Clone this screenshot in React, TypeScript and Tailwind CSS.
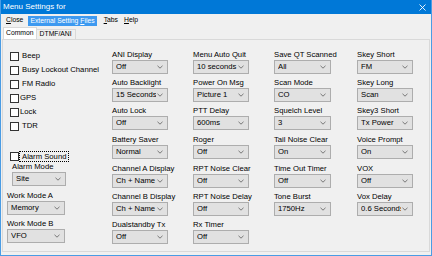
const font = { fontFamily: '"Liberation Sans", Arial, sans-serif' };

type Field = { label: string; value: string; mt?: string };

const columns: { x: string; w: string; items: Field[] }[] = [
  {
    x: "w-[81px]",
    w: "w-[56px]",
    items: [
      { label: "ANI Display", value: "Off" },
      { label: "Auto Backlight", value: "15 Seconds" },
      { label: "Auto Lock", value: "Off" },
      { label: "Battery Saver", value: "Normal", mt: "mt-[5px]" },
      { label: "Channel A Display", value: "Ch + Name", mt: "mt-[5px]" },
      { label: "Channel B Display", value: "Ch + Name" },
      { label: "Dualstandby Tx", value: "Off" },
    ],
  },
  {
    x: "w-[81px]",
    w: "w-[56px]",
    items: [
      { label: "Menu Auto Quit", value: "10 seconds" },
      { label: "Power On Msg", value: "Picture 1" },
      { label: "PTT Delay", value: "600ms" },
      { label: "Roger", value: "Off", mt: "mt-[5px]" },
      { label: "RPT Noise Clear", value: "Off", mt: "mt-[5px]" },
      { label: "RPT Noise Delay", value: "Off" },
      { label: "Rx Timer", value: "Off" },
    ],
  },
  {
    x: "w-[83px]",
    w: "w-[57px]",
    items: [
      { label: "Save QT Scanned", value: "All" },
      { label: "Scan Mode", value: "CO" },
      { label: "Squelch Level", value: "3" },
      { label: "Tail Noise Clear", value: "On", mt: "mt-[5px]" },
      { label: "Time Out Timer", value: "Off", mt: "mt-[5px]" },
      { label: "Tone Burst", value: "1750Hz" },
    ],
  },
  {
    x: "w-[60px]",
    w: "w-[56px]",
    items: [
      { label: "Skey Short", value: "FM" },
      { label: "Skey Long", value: "Scan" },
      { label: "Skey3 Short", value: "Tx Power" },
      { label: "Voice Prompt", value: "On", mt: "mt-[5px]" },
      { label: "VOX", value: "Off", mt: "mt-[5px]" },
      { label: "Vox Delay", value: "0.6 Seconds" },
    ],
  },
];

const checks = [
  { label: "Beep", gap: "gap-[3px]" },
  { label: "Busy Lockout Channel", gap: "gap-[3px]" },
  { label: "FM Radio", gap: "gap-[3px]" },
  { label: "GPS", gap: "gap-[1px]" },
  { label: "Lock", gap: "gap-[1px]" },
  { label: "TDR", gap: "gap-[3px]" },
];

function Chevron() {
  return (
    <svg width="6" height="4" viewBox="0 0 6 4" className="shrink-0">
      <polyline points="0.5,0.8 3,3.2 5.5,0.8" fill="none" stroke="#5a5a5a" strokeWidth="0.8" />
    </svg>
  );
}

function Select({ value, w }: { value: string; w: string }) {
  return (
    <div className={`flex h-[14px] ${w} items-center gap-[1px] overflow-hidden border border-[#adadad] bg-[#e1e1e1] pl-[3px] pr-[4px]`}>
      <span className="min-w-0 flex-1 overflow-hidden whitespace-nowrap">{value}</span>
      <Chevron />
    </div>
  );
}

function Labeled({ label, value, w, mt }: { label: string; value: string; w: string; mt?: string }) {
  return (
    <div className={`flex flex-col ${mt ?? "mt-[4px]"} first:mt-0`}>
      <div className="h-[10px] leading-[10px] whitespace-nowrap">{label}</div>
      <Select value={value} w={w} />
    </div>
  );
}

function Box() {
  return <span className="block h-[9px] w-[9px] shrink-0 border border-[#333] bg-white" />;
}

export default function App() {
  return (
    <div style={font} className="flex h-[256px] w-[432px] flex-col overflow-hidden border-x border-b border-[#4a9ce4] bg-[#f0f0f0] text-[7.7px] text-black">
      {/* title bar */}
      <div className="-mx-px flex h-[14px] shrink-0 items-center justify-between bg-[#0078d7] pl-[3px] pr-[6px] text-[8px] text-white">
        <span>Menu Settings for</span>
        <svg width="7" height="7" viewBox="0 0 7 7">
          <path d="M0.5 0.5 L6.5 6.5 M6.5 0.5 L0.5 6.5" stroke="white" strokeWidth="0.9" />
        </svg>
      </div>

      {/* menu */}
      <div className="flex h-[13px] shrink-0 items-center pl-[4px] text-[6.8px]">
        <span className="px-px"><u>C</u>lose</span>
        <span className="ml-[4px] inline-block h-[10px] bg-[#3d99f0] px-[2px] leading-[10px] whitespace-pre text-white">
          External Setting <u>F</u>iles
        </span>
        <span className="ml-[7px]"><u>T</u>abs</span>
        <span className="ml-[6px]"><u>H</u>elp</span>
      </div>

      {/* tabs */}
      <div className="flex h-[12px] shrink-0 items-end pl-[2px] text-[6.8px]">
        <div className="flex h-[12px] items-center border-x border-t border-[#d9d9d9] bg-white px-[2px]">Common</div>
        <div className="flex h-[10px] items-center border-r border-t border-[#d9d9d9] px-[3px]">DTMF/ANI</div>
      </div>

      {/* panel */}
      <div className="mx-[1px] flex h-[213px] shrink-0 border border-[#d9d9d9] pl-[4px]">
        <div className="flex w-[105px] flex-col">
          <div className="flex flex-col pl-[3px] pt-[9px]">
            {checks.map((c) => (
              <div key={c.label} className={`flex h-[14px] items-center ${c.gap} whitespace-nowrap`}>
                <Box />
                <span>{c.label}</span>
              </div>
            ))}
            <div className="mt-[16px] flex h-[14px] items-center whitespace-nowrap">
              <Box />
              <span className="border border-dotted border-black px-[2px] leading-[9px]">Alarm Sound</span>
            </div>
          </div>
          <div className="mt-[-1px] flex flex-col">
            <div className="pl-[5px]">
              <Labeled label="Alarm Mode" value="Site" w="w-[54px]" mt="mt-0" />
            </div>
            <Labeled label="Work Mode A" value="Memory" w="w-[58px]" mt="mt-[5px]" />
            <Labeled label="Work Mode B" value="VFO" w="w-[58px]" />
          </div>
        </div>
        {columns.map((col, i) => (
          <div key={i} className={`flex ${col.x} flex-col pt-[10px]`}>
            {col.items.map((f) => (
              <Labeled key={f.label} label={f.label} value={f.value} w={col.w} mt={f.mt} />
            ))}
          </div>
        ))}
      </div>
    </div>
  );
}
